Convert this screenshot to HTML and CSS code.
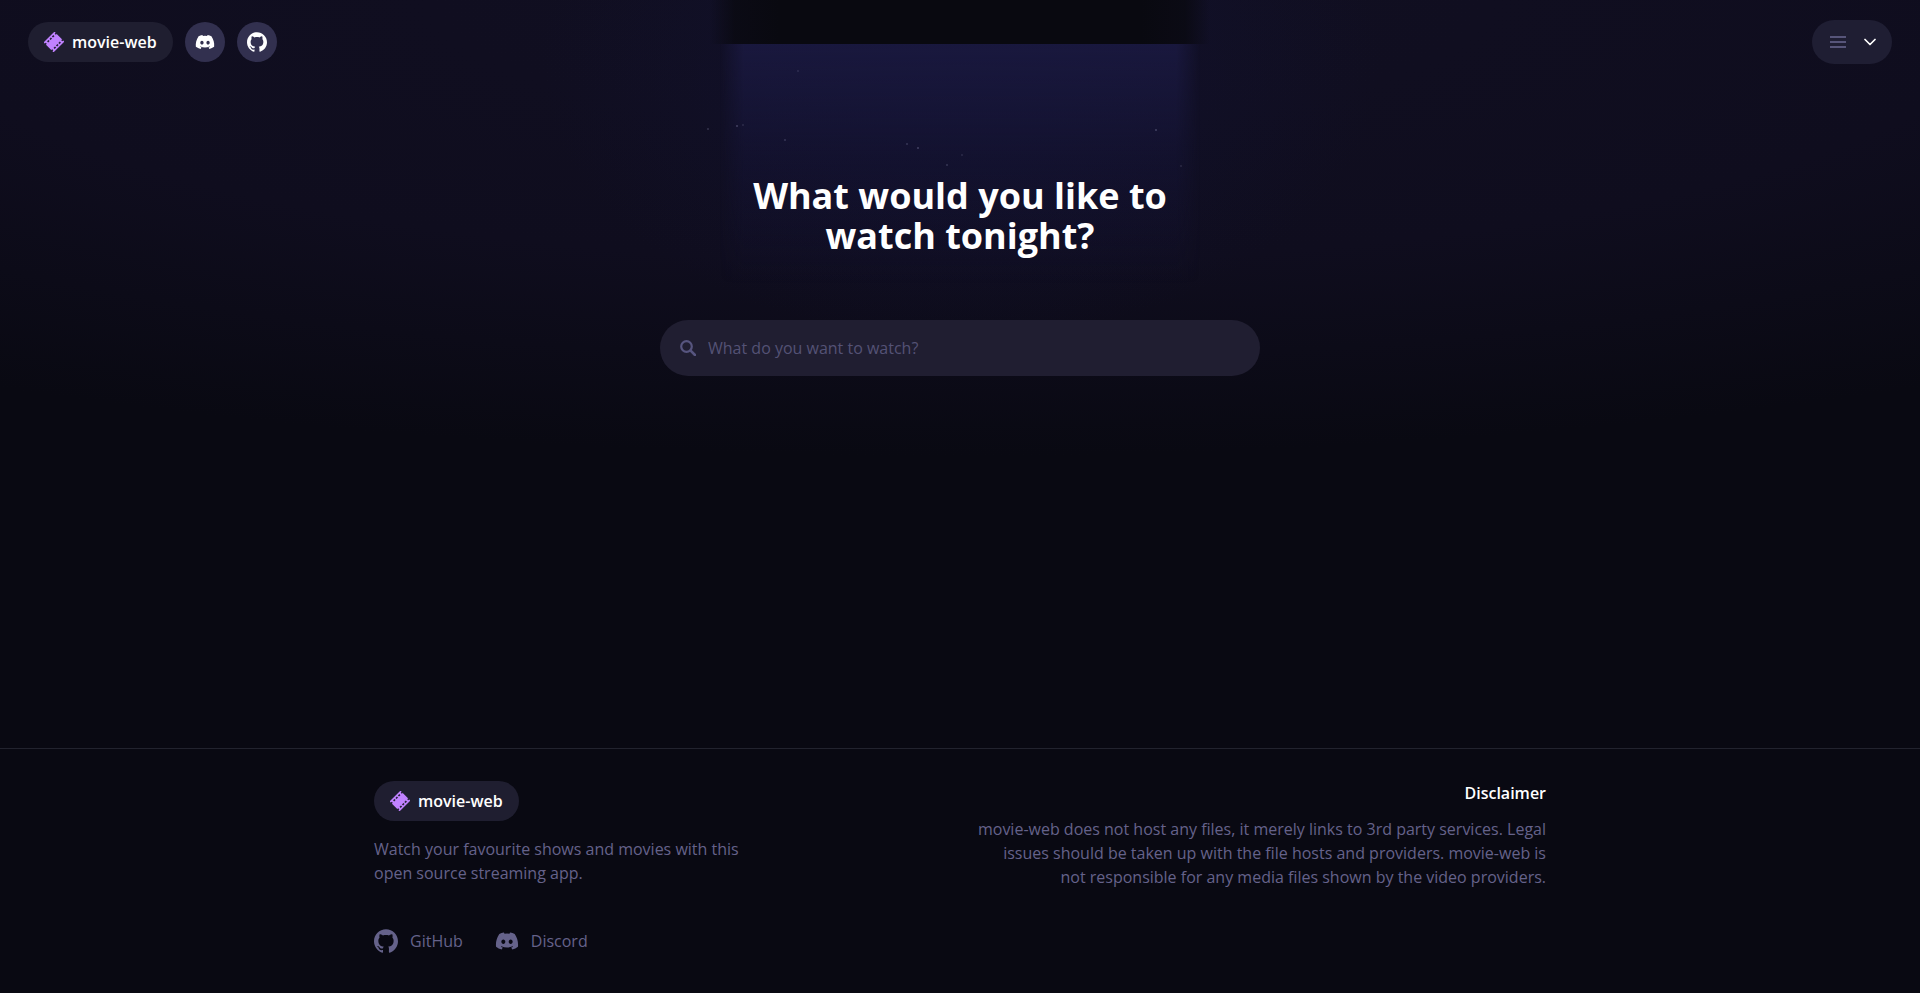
FILE: index.html
```html
<!DOCTYPE html>
<html lang="en">

<head>
    <meta charset="UTF-8">
    <meta name="viewport" content="width=device-width, initial-scale=1.0">
    <title>movie-web</title>
    <link rel="stylesheet" href="styles.css">
</head>

<body>
    <!-- shared icons -->
    <svg class="sprite" aria-hidden="true">
        <symbol id="film" viewBox="0 0 20 20">
            <g transform="rotate(-45 10 10)">
                <path fill="currentColor" fill-rule="evenodd" d="M2.4 3h15.2v14H2.4zM2.4 4.6v1.6h1.2V4.6zM5.6 4.6v1.6h2V4.6zM9 4.6v1.6h2V4.6zM12.4 4.6v1.6h2V4.6zM16.4 4.6v1.6h1.2V4.6zM2.4 13.8v1.6h1.2v-1.6zM5.6 13.8v1.6h2v-1.6zM9 13.8v1.6h2v-1.6zM12.4 13.8v1.6h2v-1.6zM16.4 13.8v1.6h1.2v-1.6z" />
            </g>
        </symbol>
        <symbol id="discord" viewBox="-1 -1 26 26">
            <path fill="currentColor" d="M20.317 4.37a19.79 19.79 0 0 0-4.885-1.515.074.074 0 0 0-.079.037c-.21.375-.444.864-.608 1.25a18.27 18.27 0 0 0-5.487 0 12.64 12.64 0 0 0-.617-1.25.077.077 0 0 0-.079-.037A19.736 19.736 0 0 0 3.677 4.37a.07.07 0 0 0-.032.027C.533 9.046-.32 13.58.099 18.057a.082.082 0 0 0 .031.057 19.9 19.9 0 0 0 5.993 3.03.078.078 0 0 0 .084-.028c.462-.63.874-1.295 1.226-1.994a.076.076 0 0 0-.041-.106 13.107 13.107 0 0 1-1.872-.892.077.077 0 0 1-.008-.128c.126-.094.252-.192.372-.292a.074.074 0 0 1 .077-.01c3.928 1.793 8.18 1.793 12.062 0a.074.074 0 0 1 .078.01c.12.098.246.198.373.292a.077.077 0 0 1-.006.127 12.299 12.299 0 0 1-1.873.892.077.077 0 0 0-.041.107c.36.698.772 1.362 1.225 1.993a.076.076 0 0 0 .084.028 19.839 19.839 0 0 0 6.002-3.03.077.077 0 0 0 .032-.054c.5-5.177-.838-9.674-3.549-13.66a.061.061 0 0 0-.031-.03zM8.02 15.33c-1.183 0-2.157-1.085-2.157-2.419 0-1.333.956-2.419 2.157-2.419 1.21 0 2.176 1.096 2.157 2.42 0 1.333-.956 2.418-2.157 2.418zm7.975 0c-1.183 0-2.157-1.085-2.157-2.419 0-1.333.955-2.419 2.157-2.419 1.21 0 2.176 1.096 2.157 2.42 0 1.333-.946 2.418-2.157 2.418z" />
        </symbol>
        <symbol id="github" viewBox="0 0 24 24">
            <path fill="currentColor" d="M12 .297c-6.63 0-12 5.373-12 12 0 5.303 3.438 9.8 8.205 11.385.6.113.82-.258.82-.577 0-.285-.01-1.04-.015-2.04-3.338.724-4.042-1.61-4.042-1.61C4.422 18.07 3.633 17.7 3.633 17.7c-1.087-.744.084-.729.084-.729 1.205.084 1.838 1.236 1.838 1.236 1.07 1.835 2.809 1.305 3.495.998.108-.776.417-1.305.76-1.605-2.665-.3-5.466-1.332-5.466-5.93 0-1.31.465-2.38 1.235-3.22-.135-.303-.54-1.523.105-3.176 0 0 1.005-.322 3.3 1.23.96-.267 1.98-.399 3-.405 1.02.006 2.04.138 3 .405 2.28-1.552 3.285-1.23 3.285-1.23.645 1.653.24 2.873.12 3.176.765.84 1.23 1.91 1.23 3.22 0 4.61-2.805 5.625-5.475 5.92.42.36.81 1.096.81 2.22 0 1.606-.015 2.896-.015 3.286 0 .315.21.69.825.57C20.565 22.092 24 17.592 24 12.297c0-6.627-5.373-12-12-12" />
        </symbol>
    </svg>

    <div class="lightbar" aria-hidden="true">
        <div class="beam"></div>
        <div class="shade"></div>
        <svg class="particles" viewBox="0 0 600 200" fill="#8a8ab0">
            <circle cx="138" cy="71" r="1" opacity=".2" />
            <circle cx="48" cy="129" r="1" opacity=".3" />
            <circle cx="77" cy="126" r="1" opacity=".4" />
            <circle cx="83" cy="125" r="1" opacity=".2" />
            <circle cx="125" cy="140" r="1" opacity=".3" />
            <circle cx="247" cy="144" r="1" opacity=".3" />
            <circle cx="258" cy="148" r="1" opacity=".4" />
            <circle cx="302" cy="155" r="1" opacity=".2" />
            <circle cx="287" cy="165" r="1" opacity=".3" />
            <circle cx="496" cy="130" r="1" opacity=".4" />
            <circle cx="521" cy="166" r="1" opacity=".2" />
        </svg>
    </div>

    <header class="nav">
        <div class="nav-left">
            <a class="brand" href="#"><svg><use href="#film" /></svg>movie-web</a>
            <a class="round" href="#" aria-label="Discord"><svg><use href="#discord" /></svg></a>
            <a class="round" href="#" aria-label="GitHub"><svg><use href="#github" /></svg></a>
        </div>
        <button class="menu" type="button" aria-label="Menu">
            <svg class="bars" viewBox="0 0 16 12" fill="currentColor">
                <path d="M0 0h16v2H0zM0 5h16v2H0zM0 10h16v2H0z" />
            </svg>
            <svg class="chevron" viewBox="0 0 12 8" fill="none" stroke="currentColor" stroke-width="1.7" stroke-linecap="round" stroke-linejoin="round">
                <path d="M1 1.5l5 5 5-5" />
            </svg>
        </button>
    </header>

    <main class="hero">
        <h1>What would you like to watch tonight?</h1>
        <label class="search">
            <svg viewBox="0 0 16 16" fill="none" stroke="currentColor">
                <circle cx="6.5" cy="6.5" r="5.3" stroke-width="2.2" />
                <path d="M10.6 10.6L15 15" stroke-width="2.6" stroke-linecap="round" />
            </svg>
            <input type="text" placeholder="What do you want to watch?" aria-label="Search">
        </label>
    </main>

    <footer class="footer">
        <div class="footer-inner">
            <div class="about">
                <a class="brand" href="#"><svg><use href="#film" /></svg>movie-web</a>
                <p>Watch your favourite shows and movies with this open source streaming app.</p>
            </div>
            <div class="disclaimer">
                <h2>Disclaimer</h2>
                <p>movie-web does not host any files, it merely links to 3rd party services. Legal issues should be taken up with the file hosts and providers. movie-web is not responsible for any media files shown by the video providers.</p>
            </div>
            <div class="links">
                <a href="#"><svg><use href="#github" /></svg>GitHub</a>
                <a href="#"><svg><use href="#discord" /></svg>Discord</a>
            </div>
        </div>
    </footer>
</body>

</html>
```
FILE: styles.css
```css
* {
    box-sizing: border-box;
}

body {
    margin: 0;
    min-height: 100vh;
    display: flex;
    flex-direction: column;
    position: relative;
    background: #090912;
    color: #fff;
    font: 16px/24px "Open Sans", "Noto Sans", sans-serif;
}

h1, h2, p {
    margin: 0;
}

a {
    color: inherit;
    text-decoration: none;
}

.sprite {
    position: absolute;
    width: 0;
    height: 0;
}

/* light effect behind the page */
.lightbar {
    position: absolute;
    top: 0;
    left: 0;
    right: 0;
    height: 480px;
    overflow: hidden;
    z-index: -1;
    background:
        radial-gradient(420px 280px at 50% 60px, rgba(18, 18, 50, .7), transparent),
        radial-gradient(100% 100% at 50% 0, #110f22 0%, #0f0d1e 55%, #090912 95%);
}

.beam, .shade {
    position: absolute;
    left: 50%;
    transform: translateX(-50%);
}

.beam {
    top: 44px;
    width: 480px;
    height: 240px;
    background: linear-gradient(rgba(26, 25, 64, .9), rgba(22, 21, 56, .5) 45%, transparent);
    -webkit-mask-image: linear-gradient(90deg, transparent, #000 5%, #000 95%, transparent);
    mask-image: linear-gradient(90deg, transparent, #000 5%, #000 95%, transparent);
}

/* hides the light above the bar */
.shade {
    top: 0;
    width: 500px;
    height: 44px;
    background: linear-gradient(90deg, rgba(9, 9, 16, 0), rgba(9, 9, 16, .8) 5%, #090910 14%, #090910 86%, rgba(9, 9, 16, .8) 95%, rgba(9, 9, 16, 0));
}

.particles {
    position: absolute;
    top: 0;
    left: 50%;
    width: 600px;
    height: 200px;
    transform: translateX(-50%);
}

/* navigation */
.nav {
    display: flex;
    align-items: center;
    justify-content: space-between;
    padding: 20px 28px;
}

.nav-left {
    display: flex;
    gap: 12px;
}

.brand {
    display: inline-flex;
    align-items: center;
    gap: 8px;
    height: 40px;
    padding: 0 16px;
    border-radius: 20px;
    background: #1f1e30;
    font-weight: 600;
}

.brand svg {
    width: 20px;
    height: 20px;
    color: #c082ff;
}

.round {
    display: flex;
    align-items: center;
    justify-content: center;
    width: 40px;
    height: 40px;
    border-radius: 50%;
    background: #32304f;
}

.round svg {
    width: 20px;
    height: 20px;
}

.menu {
    display: flex;
    align-items: center;
    justify-content: space-between;
    width: 80px;
    height: 44px;
    padding: 0 16px 0 18px;
    border: 0;
    border-radius: 22px;
    background: #1f1e33;
    color: #fff;
}

.bars {
    width: 16px;
    height: 12px;
    color: #57557a;
}

.chevron {
    width: 12px;
    height: 8px;
}

/* search */
.hero {
    flex: 1;
    display: flex;
    flex-direction: column;
    align-items: center;
    padding: 92px 20px 40px;
}

.hero h1 {
    max-width: 448px;
    margin-bottom: 64px;
    font-size: 36px;
    line-height: 40px;
    font-weight: 700;
    text-align: center;
}

.search {
    display: flex;
    align-items: center;
    gap: 12px;
    width: 100%;
    max-width: 600px;
    height: 56px;
    padding: 0 20px;
    border-radius: 28px;
    background: #201e31;
    color: #57557f;
}

.search svg {
    width: 16px;
    height: 16px;
}

.search input {
    flex: 1;
    padding: 0;
    border: 0;
    outline: 0;
    background: none;
    color: #fff;
    font: inherit;
}

.search input::placeholder {
    color: #545275;
    opacity: 1;
}

/* footer */
.footer {
    padding: 32px 20px 40px;
    border-top: 1px solid #22232e;
    color: #65628a;
}

.footer-inner {
    display: grid;
    grid-template-columns: 1fr 1fr;
    max-width: 1172px;
    margin: 0 auto;
}

.footer .brand {
    margin-bottom: 16px;
    color: #fff;
}

.about p {
    max-width: 384px;
}

.disclaimer {
    padding-left: 16px;
    text-align: right;
}

.disclaimer h2 {
    margin-bottom: 12px;
    color: #fff;
    font-size: 16px;
    font-weight: 600;
}

.links {
    display: flex;
    gap: 32px;
    padding-top: 40px;
}

.links a {
    display: flex;
    align-items: center;
    gap: 12px;
}

.links svg {
    width: 24px;
    height: 24px;
}
```
